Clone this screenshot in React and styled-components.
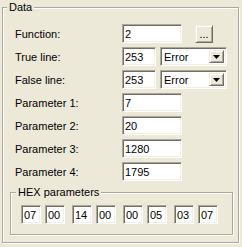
import React from "react";
import styled, { createGlobalStyle } from "styled-components";

const GlobalStyle = createGlobalStyle`
  html, body {
    margin: 0;
    padding: 0;
    background: #ece9d8;
  }
  body {
    font-family: "Liberation Sans", Arial, sans-serif;
    font-size: 11px;
    color: #000;
  }
`;

const Page = styled.div`
  width: 242px;
  height: 247px;
  box-sizing: border-box;
  padding: 1px 0 0 2px;
`;

const Group = styled.fieldset`
  margin: ${({ $margin }) => $margin || "0"};
  padding: ${({ $pad }) => $pad};
  width: ${({ $width }) => $width}px;
  box-sizing: border-box;
  min-width: 0;
  border: 1px solid #aca899;
  box-shadow: 1px 1px 0 #fff, inset 1px 1px 0 #fff;
`;

const Legend = styled.legend`
  margin-left: ${({ $offset }) => $offset}px;
  padding: 0 2px;
  line-height: 13px;
  background: #ece9d8;
`;

const Form = styled.div`
  display: flex;
  flex-direction: column;
  gap: 4px;
`;

const Row = styled.div`
  display: flex;
  align-items: center;
  height: 19px;
  padding-left: 5px;
`;

const Label = styled.span`
  width: 107px;
  flex: none;
`;

const Edit = styled.div`
  width: ${({ $w }) => $w}px;
  height: 19px;
  box-sizing: border-box;
  flex: none;
  display: flex;
  align-items: center;
  padding-left: 1px;
  background: #fff;
  border: 1px solid;
  border-color: #aca899 #fff #fff #aca899;
  box-shadow: inset 1px 1px 0 #716f64, inset -1px -1px 0 #f1efe2;
  padding: 0 0 0 2px;
`;

const Combo = styled.div`
  width: 67px;
  height: 19px;
  margin-left: 4px;
  box-sizing: border-box;
  display: flex;
  align-items: stretch;
  background: #fff;
  border: 1px solid;
  border-color: #aca899 #fff #fff #aca899;
  box-shadow: inset 1px 1px 0 #716f64, inset -1px -1px 0 #f1efe2;
  padding: 2px;
`;

const ComboText = styled.span`
  flex: 1;
  display: flex;
  align-items: center;
  padding-left: 1px;
`;

const Raised = styled.div`
  box-sizing: border-box;
  display: flex;
  align-items: center;
  justify-content: center;
  background: #ece9d8;
  border: 1px solid;
  border-color: #f1efe2 #716f64 #716f64 #f1efe2;
  box-shadow: inset 1px 1px 0 #fff, inset -1px -1px 0 #aca899;
`;

const DropButton = styled(Raised)`
  width: 15px;
`;

const DotsButton = styled(Raised)`
  width: 18px;
  height: 18px;
  margin-left: 13px;
  align-items: flex-end;
  padding-bottom: 2px;
  line-height: 1;
`;

const HexRow = styled.div`
  display: flex;
  gap: 7px;
`;

const HexPair = styled.div`
  display: flex;
  gap: 4px;
`;

const Arrow = () => (
  <svg width="7" height="4" viewBox="0 0 7 4">
    <polygon points="0,0 7,0 3.5,4" fill="#000" />
  </svg>
);

const params = [
  ["Parameter 1:", "7"],
  ["Parameter 2:", "20"],
  ["Parameter 3:", "1280"],
  ["Parameter 4:", "1795"],
];

const hex = [
  ["07", "00"],
  ["14", "00"],
  ["00", "05"],
  ["03", "07"],
];

export default function App() {
  return (
    <Page>
      <GlobalStyle />
      <Group $width={237} $pad="10px 5px 0 7px">
        <Legend $offset={-3}>Data</Legend>
        <Form>
          <Row>
            <Label>Function:</Label>
            <Edit $w={60}>2</Edit>
            <DotsButton>...</DotsButton>
          </Row>
          {["True line:", "False line:"].map((label) => (
            <Row key={label}>
              <Label>{label}</Label>
              <Edit $w={34}>253</Edit>
              <Combo>
                <ComboText>Error</ComboText>
                <DropButton>
                  <Arrow />
                </DropButton>
              </Combo>
            </Row>
          ))}
          {params.map(([label, value]) => (
            <Row key={label}>
              <Label>{label}</Label>
              <Edit $w={60}>{value}</Edit>
            </Row>
          ))}
        </Form>
        <Group $width={223} $pad="6px 0 10px 10px" $margin="5px 0 7px 0">
          <Legend $offset={-5}>HEX parameters</Legend>
          <HexRow>
            {hex.map((pair, i) => (
              <HexPair key={i}>
                {pair.map((v, j) => (
                  <Edit key={j} $w={20}>
                    {v}
                  </Edit>
                ))}
              </HexPair>
            ))}
          </HexRow>
        </Group>
      </Group>
    </Page>
  );
}
